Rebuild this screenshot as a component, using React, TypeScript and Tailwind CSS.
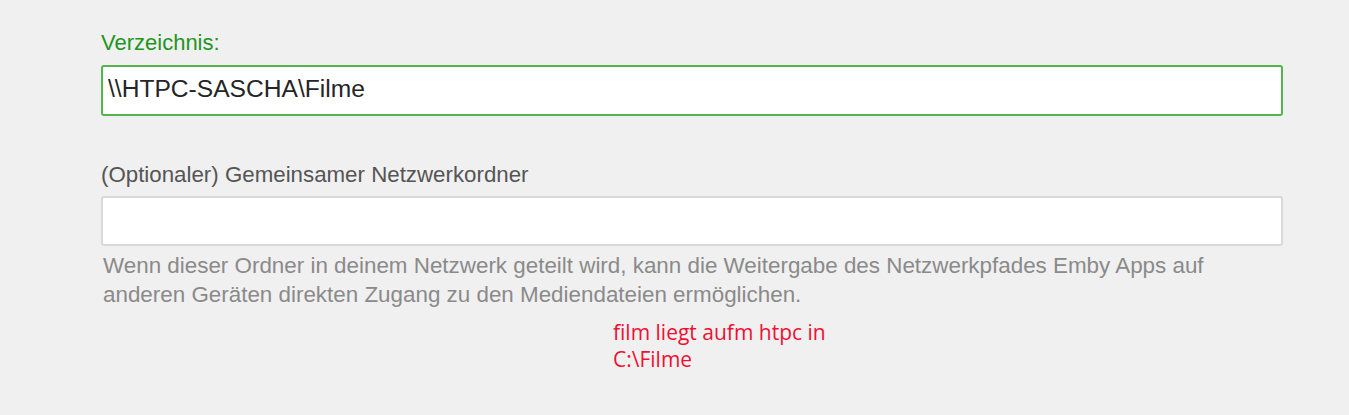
export default function App() {
  return (
    <div className="min-h-[415px] w-full bg-[#f0f0f0] font-['Liberation_Sans',Arial,sans-serif]">
      <div className="ml-[101px] w-[1182px] pt-[30px]">
        {/* Directory field */}
        <label className="block text-[22px] leading-[26px] text-[#1e961e]">Verzeichnis:</label>
        <input
          readOnly
          value="\\HTPC-SASCHA\Filme"
          className="mt-[9px] block h-[51px] w-full rounded-[3px] border-2 border-[#52b54b] bg-white pl-[5px] pb-[4px] text-[24.6px] text-[#252525] outline-none font-['Liberation_Sans',Arial,sans-serif]"
        />

        {/* Optional network share */}
        <label className="mt-[46px] block text-[22.3px] leading-[26px] text-[#555]">
          (Optionaler) Gemeinsamer Netzwerkordner
        </label>
        <input
          readOnly
          value=""
          className="mt-[8px] block h-[50px] w-full rounded-[3px] border-2 border-[#d9d9d9] bg-white outline-none"
        />
        <p className="mt-[5px] pl-[2px] text-[22.4px] leading-[29px] text-[#8a8a8a]">
          Wenn dieser Ordner in deinem Netzwerk geteilt wird, kann die Weitergabe des Netzwerkpfades Emby Apps auf
          <br />
          anderen Geräten direkten Zugang zu den Mediendateien ermöglichen.
        </p>
      </div>

      {/* Annotation */}
      <div className="ml-[613px] mt-[10px] text-[21px] leading-[27px] text-[#ee1133] font-['Open_Sans','Noto_Sans',sans-serif]">
        film liegt aufm htpc in
        <br />
        C:\Filme
      </div>
    </div>
  );
}
